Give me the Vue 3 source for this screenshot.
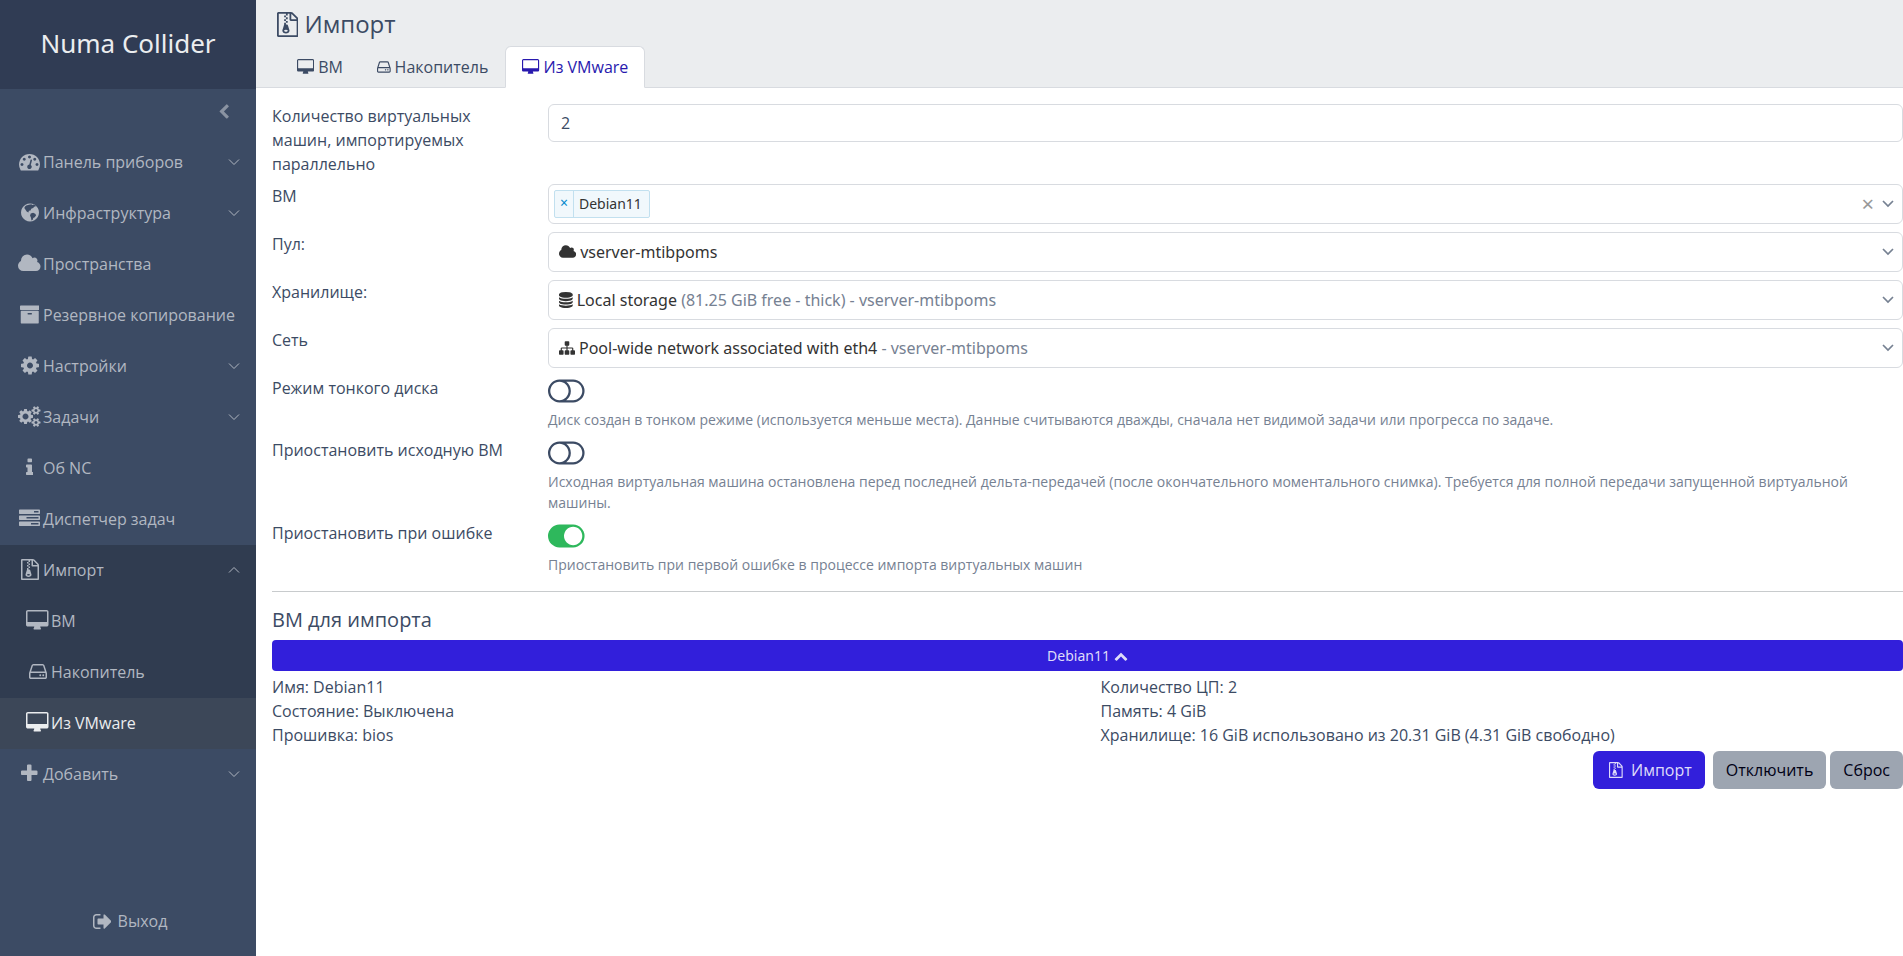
<script setup>
import { h, ref } from 'vue'

const icons = {
  dashboard: [0, 1792, 'M384 1152q0-53-37.5-90.5t-90.5-37.5-90.5 37.5-37.5 90.5 37.5 90.5 90.5 37.5 90.5-37.5 37.5-90.5zm192-448q0-53-37.5-90.5t-90.5-37.5-90.5 37.5-37.5 90.5 37.5 90.5 90.5 37.5 90.5-37.5 37.5-90.5zm428 481l101-382q6-26-7.5-48.5t-38.5-29.5-48 6.5-30 39.5l-101 382q-60 5-107 43.5t-63 98.5q-20 77 20 146t117 89 146-20 89-117q16-60-6-117t-72-91zm660-33q0-53-37.5-90.5t-90.5-37.5-90.5 37.5-37.5 90.5 37.5 90.5 90.5 37.5 90.5-37.5 37.5-90.5zm-640-640q0-53-37.5-90.5t-90.5-37.5-90.5 37.5-37.5 90.5 37.5 90.5 90.5 37.5 90.5-37.5 37.5-90.5zm448 192q0-53-37.5-90.5t-90.5-37.5-90.5 37.5-37.5 90.5 37.5 90.5 90.5 37.5 90.5-37.5 37.5-90.5zm320 448q0 261-141 483-19 29-54 29h-1402q-35 0-54-29-141-221-141-483 0-182 71-348t191-286 286-191 348-71 348 71 286 191 191 286 71 348z'],
  globe: [128, 1536, 'M896 128a768 768 0 1 0 .1 0zM800 230l200-40 120 60 180-30 120 120-160 60-100 120-160 60-60 140-140 20-40 160-150-100-110-150-90-130 60-130 110-90zM960 980l200-60 180 90 80 120-120 170-130 60-40 160-110 60-40-240-80-180z'],
  cloud: [64, 1920, 'M1984 1152q0 159-112.5 271.5t-271.5 112.5h-1088q-185 0-316.5-131.5t-131.5-316.5q0-132 71-241.5t187-163.5q-2-28-2-43 0-212 150-362t362-150q158 0 286.5 88t187.5 230q70-62 166-62 106 0 181 75t75 181q0 75-41 138 129 30 213 134.5t84 239.5z'],
  archive: [64, 1664, 'M1088 832q0-26-19-45t-45-19h-256q-26 0-45 19t-19 45 19 45 45 19h256q26 0 45-19t19-45zm576-192v960q0 26-19 45t-45 19h-1408q-26 0-45-19t-19-45v-960q0-26 19-45t45-19h1408q26 0 45 19t19 45zm64-448v256q0 26-19 45t-45 19h-1536q-26 0-45-19t-19-45v-256q0-26 19-45t45-19h1536q26 0 45 19t19 45z'],
  cog: [128, 1536, 'M1152 896q0-106-75-181t-181-75-181 75-75 181 75 181 181 75 181-75 75-181zm512-109v222q0 12-8 23t-20 13l-185 28q-19 54-39 91 35 50 107 138 10 12 10 25t-9 23q-27 37-99 108t-94 71q-12 0-26-9l-138-108q-44 23-91 38-16 136-29 186-7 28-36 28h-222q-14 0-24.5-8.5t-11.5-21.5l-28-184q-49-16-90-37l-141 107q-10 9-25 9-14 0-25-11-126-114-165-168-7-10-7-23 0-12 8-23 15-21 51-66.5t54-70.5q-27-50-41-99l-183-27q-13-2-21-12.5t-8-23.5v-222q0-12 8-23t19-13l186-28q14-46 39-92-40-57-107-138-10-12-10-24 0-10 9-23 26-36 98.5-107.5t94.5-71.5q13 0 26 10l138 107q44-23 91-38 16-136 29-186 7-28 36-28h222q14 0 24.5 8.5t11.5 21.5l28 184q49 16 90 37l142-107q9-9 24-9 13 0 25 10 129 119 165 170 7 8 7 22 0 12-8 23-15 21-51 66.5t-54 70.5q26 50 41 98l183 28q13 2 21 12.5t8 23.5z'],
  cogs: [0, 1920, 'M896 896q0-106-75-181t-181-75-181 75-75 181 75 181 181 75 181-75 75-181zm768 512q0-52-38-90t-90-38-90 38-38 90q0 53 37.5 90.5t90.5 37.5 90.5-37.5 37.5-90.5zm0-1024q0-52-38-90t-90-38-90 38-38 90q0 53 37.5 90.5t90.5 37.5 90.5-37.5 37.5-90.5zm-384 421v185q0 10-7 19.5t-16 10.5l-155 24q-11 35-32 76 34 48 90 115 7 11 7 20 0 12-7 19-23 30-82.5 89.5t-78.5 59.5q-11 0-21-7l-115-90q-37 19-77 31-11 108-23 155-7 24-30 24h-186q-11 0-20-7.5t-10-17.5l-23-153q-34-10-75-31l-118 89q-7 7-20 7-11 0-21-8-144-133-144-160 0-9 7-19 10-14 41-53t47-61q-23-44-35-82l-152-24q-10-1-17-9.5t-7-19.5v-185q0-10 7-19.5t16-10.5l155-24q11-35 32-76-34-48-90-115-7-11-7-20 0-12 7-20 22-30 82-89t79-59q11 0 21 7l115 90q34-18 77-32 11-108 23-154 7-24 30-24h186q11 0 20 7.5t10 17.5l23 153q34 10 75 31l118-89q8-7 20-7 11 0 21 8 144 133 144 160 0 8-7 19-12 16-42 54t-45 60q23 48 34 82l152 23q10 2 17 10.5t7 19.5zm640 533v140q0 16-149 31-12 27-30 52 51 113 51 138 0 4-4 7-122 71-124 71-8 0-46-47t-52-68q-20 2-30 2t-30-2q-14 21-52 68t-46 47q-2 0-124-71-4-3-4-7 0-25 51-138-18-25-30-52-149-15-149-31v-140q0-16 149-31 13-29 30-52-51-113-51-138 0-4 4-7 4-2 35-20t59-34 30-16q8 0 46 46.5t52 67.5q20-2 30-2t30 2q51-71 92-112l6-2q4 0 124 70 4 3 4 7 0 25-51 138 17 23 30 52 149 15 149 31zm0-1024v140q0 16-149 31-12 27-30 52 51 113 51 138 0 4-4 7-122 71-124 71-8 0-46-47t-52-68q-20 2-30 2t-30-2q-14 21-52 68t-46 47q-2 0-124-71-4-3-4-7 0-25 51-138-18-25-30-52-149-15-149-31v-140q0-16 149-31 13-29 30-52-51-113-51-138 0-4 4-7 4-2 35-20t59-34 30-16q8 0 46 46.5t52 67.5q20-2 30-2t30 2q51-71 92-112l6-2q4 0 124 70 4 3 4 7 0 25-51 138 17 23 30 52 149 15 149 31z'],
  info: [576, 640, 'M1216 1344v128q0 26-19 45t-45 19h-512q-26 0-45-19t-19-45v-128q0-26 19-45t45-19h64v-384h-64q-26 0-45-19t-19-45v-128q0-26 19-45t45-19h384q26 0 45 19t19 45v576h64q26 0 45 19t19 45zm-128-1152v192q0 26-19 45t-45 19h-256q-26 0-45-19t-19-45v-192q0-26 19-45t45-19h256q26 0 45 19t19 45z'],
  tasks: [0, 1792, 'M1024 1408h640v-128h-640v128zm-384-512h1024v-128h-1024v128zm640-512h384v-128h-384v128zm512 832v256q0 26-19 45t-45 19h-1664q-26 0-45-19t-19-45v-256q0-26 19-45t45-19h1664q26 0 45 19t19 45zm0-512v256q0 26-19 45t-45 19h-1664q-26 0-45-19t-19-45v-256q0-26 19-45t45-19h1664q26 0 45 19t19 45zm0-512v256q0 26-19 45t-45 19h-1664q-26 0-45-19t-19-45v-256q0-26 19-45t45-19h1664q26 0 45 19t19 45z'],
  zip: [128, 1536, 'M768 384v-128h-128v128h128zm128 128v-128h-128v128h128zm-128 128v-128h-128v128h128zm128 128v-128h-128v128h128zm700-388q28 28 48 76t20 88v1152q0 40-28 68t-68 28h-1344q-40 0-68-28t-28-68v-1600q0-40 28-68t68-28h896q40 0 88 20t76 48zm-444-244v376h376q-10-29-22-41l-313-313q-12-12-41-22zm384 1528v-1024h-416q-40 0-68-28t-28-68v-416h-128v128h-128v-128h-512v1536h1280zm-627-721l107 349q8 27 8 52 0 83-72.5 137.5t-183.5 54.5-183.5-54.5-72.5-137.5q0-25 8-52 21-63 120-396v-128h128v128h79q22 0 39 13t23 34zm-141 465q53 0 90.5-19t37.5-45-37.5-45-90.5-19-90.5 19-37.5 45 37.5 45 90.5 19z'],
  desktop: [0, 1920, 'M1792 992v-832q0-13-9.5-22.5t-22.5-9.5h-1600q-13 0-22.5 9.5t-9.5 22.5v832q0 13 9.5 22.5t22.5 9.5h1600q13 0 22.5-9.5t9.5-22.5zm128-832v1088q0 66-47 113t-113 47h-544q0 37 16 77.5t32 71 16 43.5q0 26-19 45t-45 19h-512q-26 0-45-19t-19-45q0-14 16-44t32-70 16-78h-544q-66 0-113-47t-47-113v-1088q0-66 47-113t113-47h1600q66 0 113 47t47 113z'],
  hdd: [128, 1536, 'M1168 1216q0 33-23.5 56.5t-56.5 23.5-56.5-23.5-23.5-56.5 23.5-56.5 56.5-23.5 56.5 23.5 23.5 56.5zm256 0q0 33-23.5 56.5t-56.5 23.5-56.5-23.5-23.5-56.5 23.5-56.5 56.5-23.5 56.5 23.5 23.5 56.5zm112 160v-320q0-13-9.5-22.5t-22.5-9.5h-1216q-13 0-22.5 9.5t-9.5 22.5v320q0 13 9.5 22.5t22.5 9.5h1216q13 0 22.5-9.5t9.5-22.5zm-1230-480h1180l-157-482q-4-13-16-21.5t-26-8.5h-782q-14 0-26 8.5t-16 21.5zm1358 160v320q0 66-47 113t-113 47h-1216q-66 0-113-47t-47-113v-320q0-25 16-75l197-606q17-53 63-86t101-33h782q55 0 101 33t63 86l197 606q16 50 16 75z'],
  plus: [192, 1408, 'M1600 736v192q0 40-28 68t-68 28h-416v416q0 40-28 68t-68 28h-192q-40 0-68-28t-28-68v-416h-416q-40 0-68-28t-28-68v-192q0-40 28-68t68-28h416v-416q0-40 28-68t68-28h192q40 0 68 28t28 68v416h416q40 0 68 28t28 68z'],
  signout: [64, 1568, 'M704 1440q0 4 1 20t.5 26.5-3 23.5-10 19.5-20.5 6.5h-320q-119 0-203.5-84.5t-84.5-203.5v-704q0-119 84.5-203.5t203.5-84.5h320q13 0 22.5 9.5t9.5 22.5q0 4 1 20t.5 26.5-3 23.5-10 19.5-20.5 6.5h-320q-66 0-113 47t-47 113v704q0 66 47 113t113 47h312l11.5 1 11.5 3 8 5.5 7 9 2 13.5zm928-544q0 26-19 45l-544 544q-19 19-45 19t-45-19-19-45v-288h-448q-26 0-45-19t-19-45v-384q0-26 19-45t45-19h448v-288q0-26 19-45t45-19 45 19l544 544q19 19 19 45z'],
  database: [128, 1536, 'M896 768q237 0 443-43t325-127v170q0 69-103 128t-280 93.5-385 34.5-385-34.5-280-93.5-103-128v-170q119 84 325 127t443 43zm0 768q237 0 443-43t325-127v170q0 69-103 128t-280 93.5-385 34.5-385-34.5-280-93.5-103-128v-170q119 84 325 127t443 43zm0-384q237 0 443-43t325-127v170q0 69-103 128t-280 93.5-385 34.5-385-34.5-280-93.5-103-128v-170q119 84 325 127t443 43zm0-1152q208 0 385 34.5t280 93.5 103 128v128q0 69-103 128t-280 93.5-385 34.5-385-34.5-280-93.5-103-128v-128q0-69 103-128t280-93.5 385-34.5z'],
  sitemap: [0, 1792, 'M1792 1248v320q0 40-28 68t-68 28h-320q-40 0-68-28t-28-68v-320q0-40 28-68t68-28h96v-192h-512v192h96q40 0 68 28t28 68v320q0 40-28 68t-68 28h-320q-40 0-68-28t-28-68v-320q0-40 28-68t68-28h96v-192h-512v192h96q40 0 68 28t28 68v320q0 40-28 68t-68 28h-320q-40 0-68-28t-28-68v-320q0-40 28-68t68-28h96v-192q0-52 38-90t90-38h512v-192h-96q-40 0-68-28t-28-68v-320q0-40 28-68t68-28h320q40 0 68 28t28 68v320q0 40-28 68t-68 28h-96v192h512q52 0 90 38t38 90v192h96q40 0 68 28t28 68z'],
  left: [346, 1280, 'M1427 301l-531 531 531 531q19 19 19 45t-19 45l-166 166q-19 19-45 19t-45-19l-742-742q-19-19-19-45t19-45l742-742q19-19 45-19t45 19l166 166q19 19 19 45t-19 45z'],
  up: [0, 1792, 'M1683 1331l-166 165q-19 19-45 19t-45-19l-531-531-531 531q-19 19-45 19t-45-19l-166-165q-19-19-19-45.5t19-45.5l742-741q19-19 45-19t45 19l742 741q19 19 19 45.5t-19 45.5z'],
  off: [0, 2048, 'M1152 896q0-104-40.5-198.5t-109.5-163.5-163.5-109.5-198.5-40.5-198.5 40.5-163.5 109.5-109.5 163.5-40.5 198.5 40.5 198.5 109.5 163.5 163.5 109.5 198.5 40.5 198.5-40.5 163.5-109.5 109.5-163.5 40.5-198.5zm768 0q0-104-40.5-198.5t-109.5-163.5-163.5-109.5-198.5-40.5h-386q119 90 188.5 224t69.5 288-69.5 288-188.5 224h386q104 0 198.5-40.5t163.5-109.5 109.5-163.5 40.5-198.5zm128 0q0 130-51 248.5t-136.5 204-204 136.5-248.5 51h-768q-130 0-248.5-51t-204-136.5-136.5-204-51-248.5 51-248.5 136.5-204 204-136.5 248.5-51h768q130 0 248.5 51t204 136.5 136.5 204 51 248.5z'],
  on: [0, 2048, 'M0 896q0-130 51-248.5t136.5-204 204-136.5 248.5-51h768q130 0 248.5 51t204 136.5 136.5 204 51 248.5-51 248.5-136.5 204-204 136.5-248.5 51h-768q-130 0-248.5-51t-204-136.5-136.5-204-51-248.5zm1408 512q104 0 198.5-40.5t163.5-109.5 109.5-163.5 40.5-198.5-40.5-198.5-109.5-163.5-163.5-109.5-198.5-40.5-198.5 40.5-163.5 109.5-109.5 163.5-40.5 198.5 40.5 198.5 109.5 163.5 163.5 109.5 198.5 40.5z'],
}

const Icon = (props) => {
  const [x, w, d] = icons[props.name]
  return h('svg', { viewBox: `${x} 0 ${w} 1792`, 'aria-hidden': 'true' }, [
    h('path', { d, fill: 'currentColor', 'fill-rule': 'evenodd' }),
  ])
}
Icon.props = ['name']

const nav = [
  { icon: 'dashboard', text: 'Панель приборов', more: 'down' },
  { icon: 'globe', text: 'Инфраструктура', more: 'down' },
  { icon: 'cloud', text: 'Пространства' },
  { icon: 'archive', text: 'Резервное копирование' },
  { icon: 'cog', text: 'Настройки', more: 'down' },
  { icon: 'cogs', text: 'Задачи', more: 'down' },
  { icon: 'info', text: 'Об NC' },
  { icon: 'tasks', text: 'Диспетчер задач' },
  {
    icon: 'zip',
    text: 'Импорт',
    more: 'up',
    children: [
      { icon: 'desktop', text: 'ВМ' },
      { icon: 'hdd', text: 'Накопитель' },
      { icon: 'desktop', text: 'Из VMware', active: true },
    ],
  },
  { icon: 'plus', text: 'Добавить', more: 'down' },
]

const tabs = [
  { icon: 'desktop', text: 'ВМ' },
  { icon: 'hdd', text: 'Накопитель' },
  { icon: 'desktop', text: 'Из VMware', active: true },
]

const parallel = ref('2')
const vms = ref(['Debian11'])

const selects = [
  { id: 'pool', label: 'Пул:', icon: 'cloud', main: 'vserver-mtibpoms', extra: '' },
  { id: 'storage', label: 'Хранилище:', icon: 'database', main: 'Local storage', extra: '(81.25 GiB free - thick) - vserver-mtibpoms' },
  { id: 'network', label: 'Сеть', icon: 'sitemap', main: 'Pool-wide network associated with eth4', extra: '- vserver-mtibpoms' },
]

const toggles = ref([
  { id: 'thin', label: 'Режим тонкого диска', on: false, help: 'Диск создан в тонком режиме (используется меньше места). Данные считываются дважды, сначала нет видимой задачи или прогресса по задаче.' },
  { id: 'stop-source', label: 'Приостановить исходную ВМ', on: false, help: 'Исходная виртуальная машина остановлена перед последней дельта-передачей (после окончательного моментального снимка). Требуется для полной передачи запущенной виртуальной машины.' },
  { id: 'stop-error', label: 'Приостановить при ошибке', on: true, help: 'Приостановить при первой ошибке в процессе импорта виртуальных машин' },
])
</script>

<template>
  <div class="layout">
    <aside class="sidebar">
      <div class="brand">Numa Collider</div>
      <button class="collapse" type="button" aria-label="Свернуть меню"><Icon name="left" /></button>
      <nav class="nav">
        <div v-for="item in nav" :key="item.text" :class="{ open: item.children }">
          <a href="#" class="nav-link">
            <span class="nav-icon"><Icon :name="item.icon" /></span>
            <span class="nav-text">{{ item.text }}</span>
            <svg v-if="item.more" class="more" :class="item.more" viewBox="0 0 12 8" aria-hidden="true">
              <path d="M1 1.5l5 5 5-5" fill="none" stroke="currentColor" />
            </svg>
          </a>
          <a
            v-for="child in item.children"
            :key="child.text"
            href="#"
            class="nav-link child"
            :class="{ active: child.active }"
          >
            <span class="nav-icon"><Icon :name="child.icon" /></span>
            <span class="nav-text">{{ child.text }}</span>
          </a>
        </div>
      </nav>
      <a href="#" class="logout"><span class="nav-icon"><Icon name="signout" /></span>Выход</a>
    </aside>

    <div class="page">
      <header class="header">
        <h1 class="title"><Icon name="zip" />Импорт</h1>
        <nav class="tabs">
          <a v-for="tab in tabs" :key="tab.text" href="#" class="tab" :class="{ active: tab.active }">
            <Icon :name="tab.icon" />{{ tab.text }}
          </a>
        </nav>
      </header>

      <main class="content">
        <form class="form" @submit.prevent>
          <div class="row">
            <label for="parallel">Количество виртуальных машин, импортируемых параллельно</label>
            <input id="parallel" v-model="parallel" class="input" type="text" />
          </div>

          <div class="row">
            <label for="vms">ВМ</label>
            <div class="select">
              <div v-for="vm in vms" :key="vm" class="chip">
                <button type="button" class="chip-remove" :aria-label="`Убрать ${vm}`" @click="vms = []">×</button>
                <span class="chip-text">{{ vm }}</span>
              </div>
              <input id="vms" class="search" type="text" />
              <button type="button" class="clear" aria-label="Очистить" @click="vms = []">×</button>
              <svg class="arrow" viewBox="0 0 12 8" aria-hidden="true">
                <path d="M1 1l5 5 5-5" fill="none" stroke="currentColor" stroke-width="1.7" />
              </svg>
            </div>
          </div>

          <div v-for="s in selects" :key="s.id" class="row">
            <label :for="s.id">{{ s.label }}</label>
            <div class="select">
              <div class="value">
                <Icon :name="s.icon" />
                <span>{{ s.main }} <span class="muted">{{ s.extra }}</span></span>
              </div>
              <svg class="arrow" viewBox="0 0 12 8" aria-hidden="true">
                <path d="M1 1l5 5 5-5" fill="none" stroke="currentColor" stroke-width="1.7" />
              </svg>
              <select :id="s.id" class="native">
                <option>{{ s.main }} {{ s.extra }}</option>
              </select>
            </div>
          </div>

          <div v-for="t in toggles" :key="t.id" class="row">
            <label :for="t.id">{{ t.label }}</label>
            <div>
              <div class="switch" :class="{ on: t.on }">
                <Icon :name="t.on ? 'on' : 'off'" />
                <input :id="t.id" v-model="t.on" class="native" type="checkbox" role="switch" />
              </div>
              <div class="help">{{ t.help }}</div>
            </div>
          </div>

          <hr class="rule" />

          <h2 class="subtitle">ВМ для импорта</h2>
          <button type="button" class="vm-bar">Debian11 <Icon name="up" /></button>
          <div class="details">
            <div>
              <div>Имя: Debian11</div>
              <div>Состояние: Выключена</div>
              <div>Прошивка: bios</div>
            </div>
            <div>
              <div>Количество ЦП: 2</div>
              <div>Память: 4 GiB</div>
              <div>Хранилище: 16 GiB использовано из 20.31 GiB (4.31 GiB свободно)</div>
            </div>
          </div>
          <div class="actions">
            <button type="submit" class="btn primary"><Icon name="zip" />Импорт</button>
            <button type="button" class="btn">Отключить</button>
            <button type="reset" class="btn">Сброс</button>
          </div>
        </form>
      </main>
    </div>
  </div>
</template>

<style>
body {
  margin: 0;
  background: #fff;
}
</style>

<style scoped>
* {
  box-sizing: border-box;
}
.layout {
  display: flex;
  min-height: 100vh;
  font: 16px/24px "Open Sans", "Noto Sans", sans-serif;
  color: #3c4b64;
}
.brand,
.select,
.vm-bar {
  font-family: "Noto Sans", "Open Sans", sans-serif;
}
a {
  color: inherit;
  text-decoration: none;
}
button,
input {
  font: inherit;
  color: inherit;
}
svg {
  display: block;
  flex: none;
  height: 16px;
}

.sidebar {
  display: flex;
  flex-direction: column;
  flex: 0 0 256px;
  background: #3c4b64;
  color: #b1b7c1;
}
.brand {
  display: flex;
  align-items: center;
  justify-content: center;
  height: 89px;
  padding-bottom: 4px;
  background: #303c54;
  color: #ebedef;
  font-size: 26px;
}
.collapse {
  display: flex;
  align-items: center;
  justify-content: flex-end;
  height: 48px;
  padding: 0 26px 2px;
  border: 0;
  background: none;
  color: #8a93a2;
}
.collapse svg {
  height: 16px;
}
.nav {
  flex: 1;
}
.open {
  background: #303c50;
}
.nav-link {
  display: flex;
  align-items: center;
  height: 51px;
  padding: 0 16px 2px;
}
.nav-link.child {
  padding-left: 24px;
}
.nav-link.active {
  background: #3c4758;
  color: #ebedef;
}
.nav-icon {
  display: flex;
  flex: none;
  justify-content: center;
  width: 27px;
}
.nav-icon svg {
  height: 21px;
}
.nav-text {
  flex: 1;
  white-space: nowrap;
}
.more {
  height: 8px;
}
.more.up {
  transform: rotate(180deg);
}
.logout {
  display: flex;
  align-items: center;
  justify-content: center;
  gap: 2px;
  height: 70px;
}

.page {
  flex: 1;
  min-width: 0;
}
.header {
  padding: 6px 0 0 16px;
  background: #ebedef;
  border-bottom: 1px solid #d8dbe0;
}
.title {
  display: flex;
  align-items: center;
  gap: 6px;
  margin: 0;
  padding-left: 5px;
  font-size: 24px;
  font-weight: 400;
  line-height: 36px;
}
.title svg {
  height: 25px;
}
.tabs {
  display: flex;
  margin: 4px 0 -1px 8px;
}
.tab {
  display: flex;
  align-items: center;
  gap: 4px;
  padding: 8px 16px;
  border: 1px solid transparent;
  border-radius: 6px 6px 0 0;
}
.tab.active {
  background: #fff;
  border-color: #d8dbe0 #d8dbe0 #fff;
  color: #2819ae;
}

.content {
  padding: 16px 0 0 16px;
}
.form {
  display: flex;
  flex-direction: column;
}
.row {
  display: grid;
  grid-template-columns: 1fr 5fr;
  gap: 5px;
  align-items: start;
  margin-bottom: 8px;
}
.row label {
  padding-right: 24px;
}
.input {
  width: 100%;
  height: 38px;
  padding: 0 12px;
  border: 1px solid #d8dbe0;
  border-radius: 6px;
  background: #fff;
}
.select {
  position: relative;
  display: flex;
  align-items: center;
  height: 40px;
  padding: 0 8px 0 5px;
  border: 1px solid #d8dbe0;
  border-radius: 6px;
  background: #fff;
  color: #333;
}
.value {
  display: flex;
  flex: 1;
  align-items: center;
  gap: 4px;
  padding-left: 5px;
}
.muted {
  color: #768192;
}
.arrow {
  height: 8px;
  color: #768192;
}
.native {
  position: absolute;
  inset: 0;
  width: 100%;
  height: 100%;
  margin: 0;
  opacity: 0;
  cursor: pointer;
}
.chip {
  display: flex;
  align-items: center;
  height: 28px;
  border: 1px solid #c2e0ef;
  border-radius: 2px;
  background: #f1f8fc;
  font-size: 14px;
}
.chip-remove {
  width: 19px;
  height: 26px;
  padding: 0 0 4px;
  border: 0;
  border-right: 1px solid #c2e0ef;
  background: none;
  color: #08c;
}
.chip-text {
  padding: 0 7px 0 5px;
}
.search {
  flex: 1;
  min-width: 0;
  border: 0;
  outline: 0;
  background: none;
}
.clear {
  padding: 0 8px 2px;
  border: 0;
  background: none;
  color: #999;
  font-size: 22px;
}
.switch {
  position: relative;
  display: flex;
  align-items: center;
  width: 37px;
  height: 33px;
  padding-bottom: 3px;
}
.switch svg {
  height: 32px;
}
.switch.on {
  color: #2eb85c;
}
.help {
  color: #768192;
  font-size: 14px;
  line-height: 21px;
}
.rule {
  width: 100%;
  margin: 8px 0 16px;
  border: 0;
  border-top: 1px solid #c8cbcd;
}
.subtitle {
  margin: 0 0 8px;
  font-size: 20px;
  font-weight: 400;
  line-height: 24px;
}
.vm-bar {
  display: flex;
  align-items: center;
  justify-content: center;
  gap: 4px;
  height: 31px;
  border: 0;
  border-radius: 4px;
  background: #321fdb;
  color: #dedbf9;
  font-size: 14px;
}
.vm-bar svg {
  height: 14px;
}
.details {
  display: grid;
  grid-template-columns: 1fr 1fr;
  gap: 26px;
  margin: 4px 0;
}
.actions {
  display: flex;
  justify-content: flex-end;
  gap: 4px;
}
.btn {
  display: flex;
  align-items: center;
  height: 38px;
  padding: 0 13px;
  border: 0;
  border-radius: 6px;
  background: #9da5b1;
  color: #000015;
}
.btn.primary {
  gap: 8px;
  margin-right: 4px;
  padding-left: 16px;
  background: #321fdb;
  color: #dedbf9;
}
</style>
